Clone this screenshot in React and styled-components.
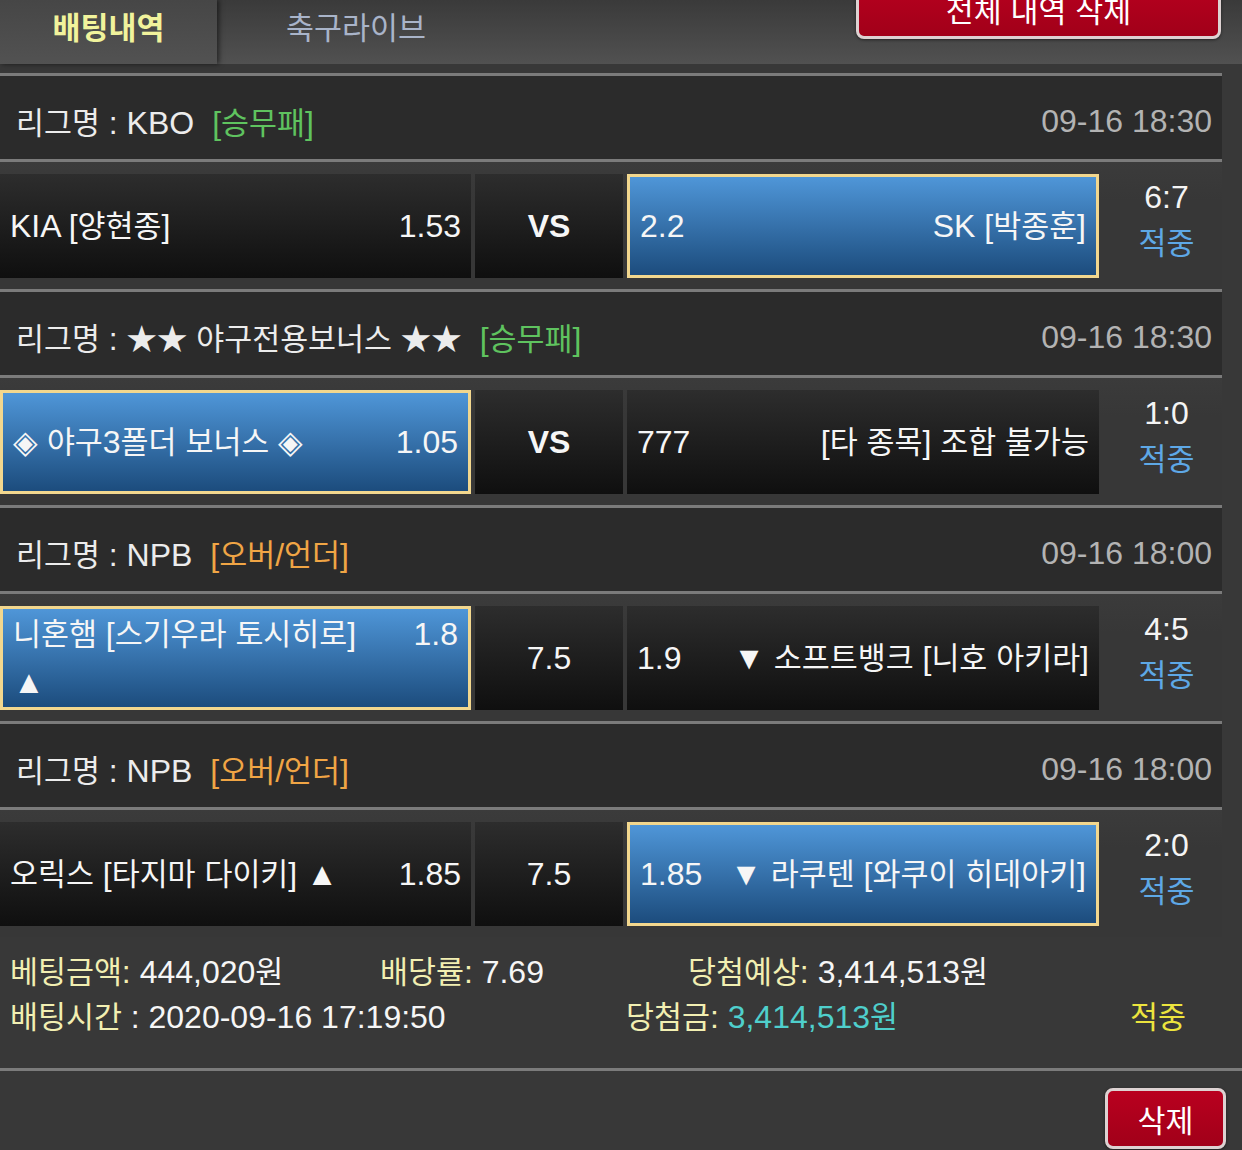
import React from "react";
import styled, { createGlobalStyle } from "styled-components";

const GlobalStyle = createGlobalStyle`
  html, body {
    margin: 0;
    padding: 0;
    background: #383838;
  }
  body {
    font-family: "Liberation Sans", "Noto Sans CJK KR", sans-serif;
    color: #f4f4f4;
  }
`;

// hangul in the original font runs a little narrower than Noto CJK
const Hangul = styled.span`
  font-size: 0.95em;
`;

const ko = (text) =>
  String(text)
    .split(/([가-힣★]+)/)
    .map((part, i) => (i % 2 ? <Hangul key={i}>{part}</Hangul> : part));

const Page = styled.div`
  width: 1242px;
  min-height: 1150px;
  background: #383838;
`;

const Header = styled.header`
  display: flex;
  align-items: flex-start;
  height: 64px;
  padding-right: 21px;
  box-sizing: border-box;
  background: linear-gradient(#3a3a3a, #515151);
`;

const Tab = styled.div`
  width: ${(p) => (p.$active ? 217 : 278)}px;
  height: 64px;
  box-sizing: border-box;
  padding-bottom: 12px;
  display: flex;
  align-items: center;
  justify-content: center;
  font-size: 32px;
  font-weight: ${(p) => (p.$active ? 700 : 400)};
  color: ${(p) => (p.$active ? "#f1f39c" : "#a9b4c9")};
  background: ${(p) => (p.$active ? "linear-gradient(#464646, #525252)" : "transparent")};
  box-shadow: ${(p) => (p.$active ? "2px 0 5px rgba(0, 0, 0, 0.55)" : "none")};
`;

const RedButton = styled.button`
  width: ${(p) => p.$w}px;
  height: 61px;
  margin: ${(p) => p.$m};
  border: 3px solid #ddd2d2;
  border-radius: 8px;
  background: linear-gradient(#b9001f, #a10019);
  color: #fff;
  font-family: inherit;
  font-size: 32px;
  cursor: pointer;
  box-shadow: 0 1px 3px rgba(0, 0, 0, 0.5);
`;

const Board = styled.div`
  width: 1222px;
  padding-top: 9px;
`;

const Divider = styled.div`
  height: 3px;
  background: #7b7b7b;
  width: ${(p) => (p.$full ? "1242px" : "auto")};
`;

const LeagueRow = styled.div`
  height: 83px;
  box-sizing: border-box;
  display: flex;
  align-items: center;
  justify-content: space-between;
  padding: 7px 10px 0 16px;
  background: #2b2b2b;
  font-size: 32px;
  color: #ececec;
`;

const Tag = styled.span`
  margin-left: 18px;
  color: ${(p) => p.$color};
`;

const Time = styled.span`
  color: #b3b3b3;
`;

const MatchRow = styled.div`
  display: grid;
  grid-template-columns: 471px 148px 472px 1fr;
  column-gap: 4px;
  padding: 12px 0 11px;
  background: linear-gradient(#3b3b3b, #373737 30%);
`;

const Pick = styled.div`
  height: 104px;
  box-sizing: border-box;
  display: grid;
  grid-template-columns: ${(p) => (p.$side === "home" ? "1fr 66px" : "auto 1fr")};
  align-content: center;
  align-items: start;
  padding: 0 10px;
  border: ${(p) => (p.$picked ? "3px solid #f2d78e" : "none")};
  background: ${(p) =>
    p.$picked
      ? "linear-gradient(#4f96d8, #1c4c7d)"
      : "linear-gradient(#2d2d2d, #0f0f0f)"};
  font-size: 32px;
  line-height: 48px;
  color: #f6f6f6;
`;

const Name = styled.span`
  text-align: ${(p) => (p.$side === "home" ? "left" : "right")};
  white-space: ${(p) => (p.$side === "home" ? "normal" : "nowrap")};
`;

const Odds = styled.span`
  text-align: ${(p) => (p.$side === "home" ? "right" : "left")};
`;

const Middle = styled.div`
  height: 104px;
  display: flex;
  align-items: center;
  justify-content: center;
  background: linear-gradient(#2d2d2d, #0f0f0f);
  font-size: 32px;
  font-weight: ${(p) => (p.$bold ? 700 : 400)};
  color: #f6f6f6;
`;

const Result = styled.div`
  display: flex;
  flex-direction: column;
  align-items: center;
  padding-left: 8px;
  font-size: 32px;
  line-height: 46px;
  color: #f4f4f4;
`;

const Hit = styled.span`
  color: #5ea8e6;
`;

const Summary = styled.div`
  height: 131px;
  box-sizing: border-box;
  padding: 13px 0 0 10px;
  font-size: 32px;
`;

const SummaryLine = styled.div`
  display: grid;
  grid-template-columns: ${(p) => p.$cols};
  line-height: 45px;
  white-space: nowrap;
`;

const Label = styled.span`
  color: #f2efb2;
`;

const Value = styled.span`
  color: ${(p) => p.$color || "#f6f6f6"};
`;

const Footer = styled.div`
  display: flex;
  justify-content: flex-end;
  padding: 17px 16px 0 0;
`;

const games = [
  {
    league: "KBO",
    type: "[승무패]",
    typeColor: "#5fc35f",
    time: "09-16 18:30",
    home: { name: "KIA [양현종]", odds: "1.53" },
    mid: "VS",
    away: { odds: "2.2", name: "SK [박종훈]" },
    picked: "away",
    score: "6:7",
  },
  {
    league: "★★ 야구전용보너스 ★★",
    type: "[승무패]",
    typeColor: "#5fc35f",
    time: "09-16 18:30",
    home: { name: "◈ 야구3폴더 보너스 ◈", odds: "1.05" },
    mid: "VS",
    away: { odds: "777", name: "[타 종목] 조합 불가능" },
    picked: "home",
    score: "1:0",
  },
  {
    league: "NPB",
    type: "[오버/언더]",
    typeColor: "#f0a545",
    time: "09-16 18:00",
    home: { name: "니혼햄 [스기우라 토시히로] ▲", odds: "1.8" },
    mid: "7.5",
    away: { odds: "1.9", name: "▼ 소프트뱅크 [니호 아키라]" },
    picked: "home",
    score: "4:5",
  },
  {
    league: "NPB",
    type: "[오버/언더]",
    typeColor: "#f0a545",
    time: "09-16 18:00",
    home: { name: "오릭스 [타지마 다이키] ▲", odds: "1.85" },
    mid: "7.5",
    away: { odds: "1.85", name: "▼ 라쿠텐 [와쿠이 히데아키]" },
    picked: "away",
    score: "2:0",
  },
];

const Game = ({ game }) => (
  <>
    <Divider />
    <LeagueRow>
      <span>
        {ko("리그명")} : {ko(game.league)}
        <Tag $color={game.typeColor}>{ko(game.type)}</Tag>
      </span>
      <Time>{game.time}</Time>
    </LeagueRow>
    <Divider />
    <MatchRow>
      <Pick $side="home" $picked={game.picked === "home"}>
        <Name $side="home">{ko(game.home.name)}</Name>
        <Odds $side="home">{game.home.odds}</Odds>
      </Pick>
      <Middle $bold={game.mid === "VS"}>{game.mid}</Middle>
      <Pick $side="away" $picked={game.picked === "away"}>
        <Odds $side="away">{game.away.odds}</Odds>
        <Name $side="away">{ko(game.away.name)}</Name>
      </Pick>
      <Result>
        <span>{game.score}</span>
        <Hit>{ko("적중")}</Hit>
      </Result>
    </MatchRow>
  </>
);

export default function App() {
  return (
    <Page>
      <GlobalStyle />
      <Header>
        <Tab $active>{ko("배팅내역")}</Tab>
        <Tab>{ko("축구라이브")}</Tab>
        <RedButton $w={365} $m="-22px 0 0 auto">
          {ko("전체 내역 삭제")}
        </RedButton>
      </Header>
      <Board>
        {games.map((g, i) => (
          <Game key={i} game={g} />
        ))}
        <Summary>
          <SummaryLine $cols="370px 308px auto">
            <span>
              <Label>{ko("베팅금액")}:</Label> <Value>444,020{ko("원")}</Value>
            </span>
            <span>
              <Label>{ko("배당률")}:</Label> <Value>7.69</Value>
            </span>
            <span>
              <Label>{ko("당첨예상")}:</Label> <Value>3,414,513{ko("원")}</Value>
            </span>
          </SummaryLine>
          <SummaryLine $cols="616px 504px auto">
            <span>
              <Label>{ko("배팅시간")}</Label> <Value>: 2020-09-16 17:19:50</Value>
            </span>
            <span>
              <Label>{ko("당첨금")}:</Label>{" "}
              <Value $color="#4fcfcc">3,414,513{ko("원")}</Value>
            </span>
            <Value $color="#ece43e">{ko("적중")}</Value>
          </SummaryLine>
        </Summary>
      </Board>
      <Divider $full />
      <Footer>
        <RedButton $w={121} $m="0">
          {ko("삭제")}
        </RedButton>
      </Footer>
    </Page>
  );
}
